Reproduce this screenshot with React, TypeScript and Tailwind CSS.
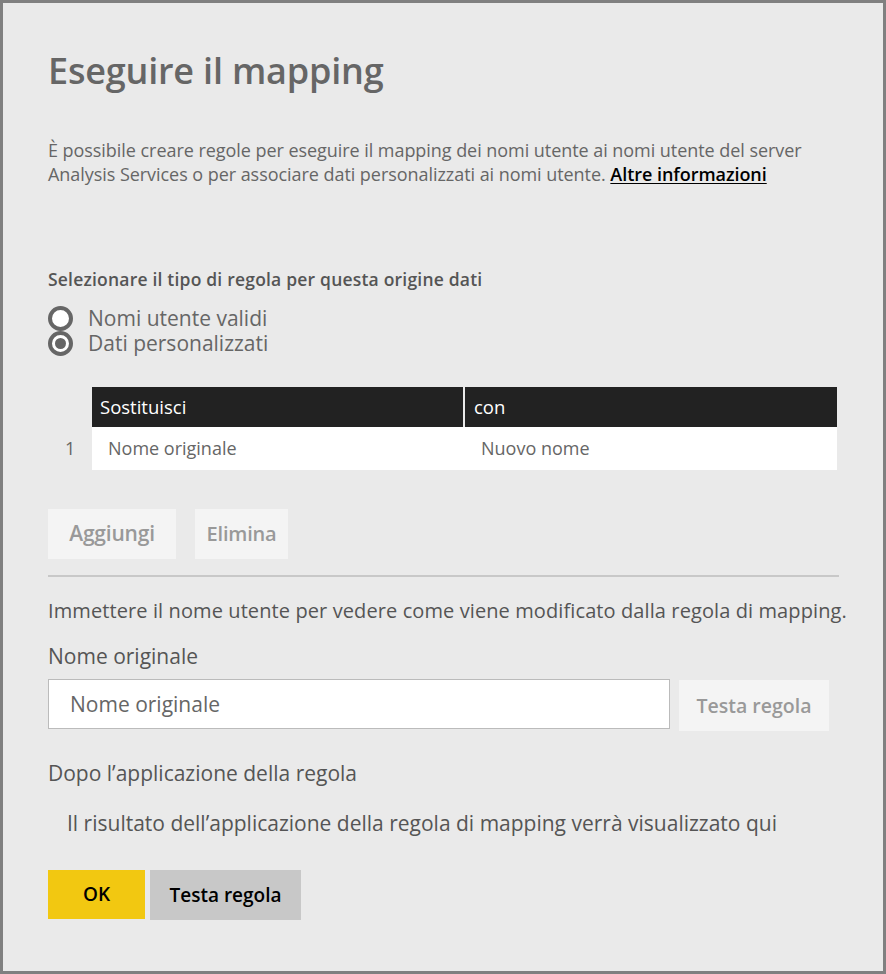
export default function App() {
  return (
    <div
      className="w-[886px] h-[974px] bg-[#eaeaea] border-[3px] border-[#808080] text-[#666]"
      style={{ fontFamily: '"Open Sans", "Noto Sans", sans-serif' }}
    >
      <div className="pl-[45px] pr-[45px]">
        {/* Title */}
        <h1 className="pt-[44px] text-[36px] leading-[48px] font-semibold text-[#666] tracking-[-0.2px]">
          Eseguire il mapping
        </h1>

        <p className="mt-[43px] text-[18px] leading-[24px] text-[#666] tracking-[-0.05px] whitespace-nowrap">
          È possibile creare regole per eseguire il mapping dei nomi utente ai nomi utente del server
          <br />
          Analysis Services o per associare dati personalizzati ai nomi utente.{" "}
          <a href="#" className="font-semibold text-black underline underline-offset-2">
            Altre informazioni
          </a>
        </p>

        {/* Rule type */}
        <div className="mt-[82px] text-[17.5px] leading-[22px] font-semibold text-[#555] tracking-[0.2px]">
          Selezionare il tipo di regola per questa origine dati
        </div>
        <div className="mt-[16px] flex flex-col text-[21px] leading-[25px] text-[#666]">
          <label className="flex items-center gap-[15px] h-[25px]">
            <span className="w-[25px] h-[25px] rounded-full bg-white border-[4px] border-[#666]" />
            Nomi utente validi
          </label>
          <label className="flex items-center gap-[15px] h-[25px]">
            <span className="w-[25px] h-[25px] rounded-full bg-white border-[4px] border-[#666] flex items-center justify-center">
              <span className="w-[11px] h-[11px] rounded-full bg-[#666]" />
            </span>
            Dati personalizzati
          </label>
        </div>

        {/* Table */}
        <div className="mt-[31px] flex flex-col">
          <div className="flex ml-[44px] w-[745px] h-[40px] bg-[#222] text-white text-[18.5px]">
            <div className="w-[373px] flex items-center pl-[8px] border-r-2 border-[#eaeaea]">Sostituisci</div>
            <div className="flex-1 flex items-center pl-[9px]">con</div>
          </div>
          <div className="flex items-center h-[43px] text-[18px]">
            <div className="w-[44px] pl-[17px] text-[#666]">1</div>
            <div className="flex w-[745px] h-full bg-white text-[#666]">
              <div className="w-[373px] flex items-center pl-[16px]">Nome originale</div>
              <div className="flex-1 flex items-center pl-[16px]">Nuovo nome</div>
            </div>
          </div>
        </div>

        {/* Add / Delete */}
        <div className="mt-[39px] flex gap-[19px]">
          <button className="w-[128px] h-[50px] bg-[#f4f4f4] text-[#999] text-[21px] font-semibold tracking-[-0.2px]">
            Aggiungi
          </button>
          <button className="w-[93px] h-[50px] bg-[#f4f4f4] text-[#999] text-[20px] font-semibold tracking-[-0.2px]">
            Elimina
          </button>
        </div>

        <hr className="mt-[16px] w-[791px] border-t-2 border-[#c8c8c8]" />

        <div className="mt-[21px] text-[20px] leading-[26px] text-[#555] tracking-[0.1px] whitespace-nowrap">
          Immettere il nome utente per vedere come viene modificato dalla regola di mapping.
        </div>

        <div className="mt-[19px] text-[21px] leading-[26px] text-[#555]">Nome originale</div>

        <div className="mt-[10px] flex gap-[9px] items-start">
          <input
            className="w-[622px] h-[50px] bg-white border border-[#bbb] pl-[21px] text-[21px] text-[#666] placeholder:text-[#666] outline-none"
            placeholder="Nome originale"
          />
          <button className="mt-[1px] w-[150px] h-[51px] bg-[#f4f4f4] text-[#999] text-[19.5px] font-semibold">
            Testa regola
          </button>
        </div>

        <div className="mt-[29px] text-[21px] leading-[26px] text-[#555]">
          Dopo l’applicazione della regola
        </div>

        <div className="mt-[24px] pl-[19px] text-[21px] leading-[26px] text-[#555] whitespace-nowrap">
          Il risultato dell’applicazione della regola di mapping verrà visualizzato qui
        </div>

        {/* Footer buttons */}
        <div className="mt-[34px] flex gap-[5px]">
          <button className="w-[97px] h-[49px] bg-[#f2c811] text-black text-[19px] font-semibold">OK</button>
          <button className="w-[151px] h-[50px] bg-[#c8c8c8] text-black text-[19px] font-semibold">
            Testa regola
          </button>
        </div>
      </div>
    </div>
  );
}
